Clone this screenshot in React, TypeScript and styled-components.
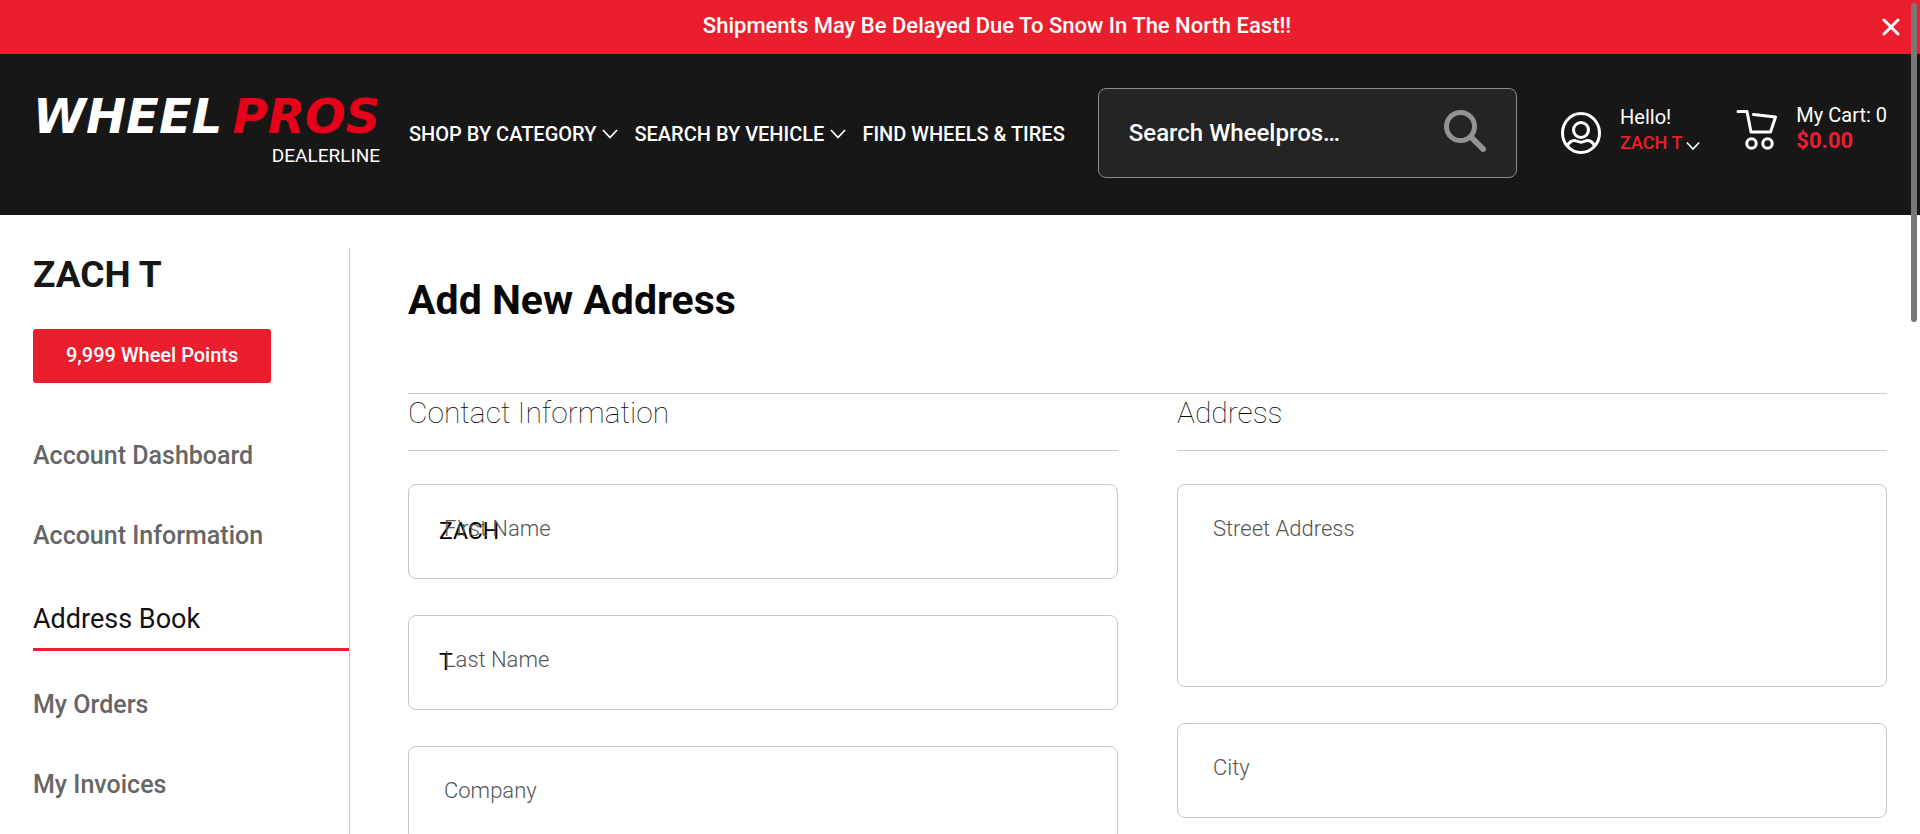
import React from 'react';
import styled, { createGlobalStyle } from 'styled-components';

const red = '#eb1e2e';
const line = '#c8c8c8';

const GlobalStyle = createGlobalStyle`
  *, *::before, *::after { box-sizing: border-box; }
  html, body { height: 100%; margin: 0; overflow: hidden; }
  #root { height: 100%; }
  body { background: #fff; color: #080808; font-family: Roboto, "Liberation Sans", sans-serif; }
  a { color: inherit; text-decoration: none; }
  button { border: 0; padding: 0; background: none; color: inherit; font-family: inherit; cursor: pointer; }
  h1, h2, p, ul, fieldset { margin: 0; padding: 0; border: 0; }
  ul { list-style: none; }
`;

const Page = styled.div`
  position: relative;
  height: 100%;
  overflow: hidden;
`;

const Banner = styled.div`
  display: flex;
  align-items: center;
  height: 54px;
  padding: 0 20px 0 112px;
  background: ${red};
  color: #fff;
`;

const BannerText = styled.p`
  flex: 1;
  padding-bottom: 2px;
  text-align: center;
  font-size: 22px;
  font-weight: 500;
  line-height: 28px;
`;

const CloseButton = styled.button`
  display: flex;
`;

const Header = styled.header`
  display: flex;
  align-items: center;
  height: 161px;
  padding: 0 33px 4px;
  background: #171717;
  color: #fff;
`;

const Logo = styled.a`
  display: flex;
  flex-direction: column;
  width: 347px;
  flex: none;
`;

const LogoName = styled.span`
  display: flex;
  justify-content: space-between;
  font: italic 700 48px/36px "DejaVu Sans", sans-serif;
`;

const LogoAccent = styled.span`
  color: #e60019;
`;

const LogoLine = styled.span`
  margin-top: 10px;
  text-align: right;
  font-size: 19px;
  line-height: 24px;
`;

const Nav = styled.nav`
  display: flex;
  gap: 16px;
  margin-left: 29px;
  padding-top: 2px;
`;

const NavLink = styled.a`
  display: flex;
  align-items: center;
  gap: 6px;
  font-size: 20px;
  font-weight: 500;
  line-height: 28px;
  white-space: nowrap;
`;

const Search = styled.form`
  display: flex;
  flex: 1;
  align-items: center;
  height: 90px;
  margin: 0 43px 0 33px;
  padding: 0 30px;
  border: 1px solid #8a8a8a;
  border-radius: 8px;
  background: #242424;
`;

const SearchInput = styled.input`
  flex: 1;
  min-width: 0;
  border: 0;
  padding: 0;
  outline: 0;
  background: none;
  color: #fff;
  font: 500 24px/32px Roboto, sans-serif;
  &::placeholder { color: #fff; opacity: 1; }
`;

const Account = styled.button`
  display: flex;
  align-items: center;
  gap: 18px;
  text-align: left;
`;

const Cart = styled.a`
  display: flex;
  align-items: center;
  gap: 18px;
  margin-left: 36px;
  padding-bottom: 6px;
`;

const Stack = styled.span<{ $lift: number }>`
  display: flex;
  flex-direction: column;
  padding-bottom: ${p => p.$lift}px;
  font-size: 20px;
  line-height: 26px;
  white-space: nowrap;
`;

const UserName = styled.span`
  display: flex;
  align-items: center;
  gap: 4px;
  color: ${red};
  font-size: 18px;
  font-weight: 500;
  svg { margin-top: 6px; }
`;

const Total = styled.strong`
  color: ${red};
  font-size: 22px;
  font-weight: 700;
`;

const Body = styled.div`
  display: flex;
  align-items: stretch;
  gap: 58px;
  padding: 33px 33px 0;
`;

const Sidebar = styled.aside`
  width: 317px;
  flex: none;
  border-right: 1px solid ${line};
`;

const Customer = styled.h2`
  color: #171717;
  font-size: 37px;
  font-weight: 700;
  line-height: 54px;
`;

const Points = styled.button`
  height: 54px;
  margin: 27px 0 33px;
  padding: 0 33px 2px;
  border-radius: 3px;
  background: ${red};
  color: #fff;
  font-size: 20px;
  font-weight: 500;
`;

const MenuLink = styled.a<{ $active?: boolean }>`
  display: block;
  padding: ${p => (p.$active ? '27px 0 13px' : '24px 0')};
  margin-bottom: ${p => (p.$active ? '14px' : '0')};
  border-bottom: ${p => (p.$active ? `3px solid ${red}` : '0')};
  color: ${p => (p.$active ? '#111' : '#666')};
  font-size: ${p => (p.$active ? '27px' : '25px')};
  font-weight: ${p => (p.$active ? 400 : 500)};
  line-height: 32px;
`;

const Main = styled.main`
  flex: 1;
  min-width: 0;
`;

const Title = styled.h1`
  padding: 28px 0 68px;
  font-size: 41px;
  font-weight: 700;
  line-height: 49px;
`;

const Form = styled.form`
  display: grid;
  grid-template-columns: 1fr 1fr;
  column-gap: 59px;
  border-top: 1px solid ${line};
`;

const Group = styled.fieldset`
  display: flex;
  flex-direction: column;
  gap: 36px;
  min-width: 0;
`;

const GroupTitle = styled.h2`
  height: 57px;
  margin-bottom: -3px;
  border-bottom: 1px solid ${line};
  font-size: 30px;
  font-weight: 100;
  line-height: 38px;
`;

const FieldBox = styled.div`
  position: relative;
  display: flex;
`;

const Label = styled.label`
  position: absolute;
  top: 31px;
  left: 36px;
  color: #555;
  font-size: 22px;
  font-weight: 300;
  line-height: 28px;
  pointer-events: none;
`;

const Input = styled.input`
  width: 100%;
  height: 95px;
  padding: 0 30px;
  border: 1px solid ${line};
  border-radius: 8px;
  background: #fff;
  color: #000;
  font: 400 23px/28px Roboto, sans-serif;
`;

const TextArea = styled.textarea`
  width: 100%;
  height: 203px;
  padding: 32px 30px;
  border: 1px solid ${line};
  border-radius: 8px;
  background: #fff;
  font: 400 23px/28px Roboto, sans-serif;
  resize: none;
`;

const ScrollThumb = styled.div`
  position: absolute;
  top: 3px;
  right: 3px;
  width: 6px;
  height: 319px;
  border-radius: 3px;
  background: #777;
`;

const Chevron = ({ size = 16 }: { size?: number }) => (
  <svg width={size} height="10" viewBox="0 0 16 10" fill="none" stroke="#fff" strokeWidth="1.8">
    <path d="M1 1l7 7.500 7-7.500" />
  </svg>
);

const CloseIcon = () => (
  <svg width="18" height="18" viewBox="0 0 18 18" fill="none" stroke="#fff" strokeWidth="3" strokeLinecap="round">
    <path d="M2 2l14 14M16 2L2 16" />
  </svg>
);

const SearchIcon = () => (
  <svg width="42" height="42" viewBox="0 0 42 42" fill="none" stroke="#929292" strokeLinecap="round">
    <circle cx="16.500" cy="16.500" r="14" strokeWidth="5" />
    <path d="M27 27l12 12" strokeWidth="6" />
  </svg>
);

const UserIcon = () => (
  <svg width="42" height="44" viewBox="0 0 42 44" fill="none" stroke="#fff" strokeWidth="3">
    <ellipse cx="21" cy="22" rx="18.500" ry="19.500" />
    <circle cx="21" cy="19" r="7.500" />
    <path d="M7.500 35c1.500-3.500 4-5.500 7-5.500 2.200 0 3.500 1.700 6.500 1.700s4.300-1.700 6.500-1.700c3 0 5.500 2 7 5.500" />
  </svg>
);

const CartIcon = () => (
  <svg width="42" height="42" viewBox="0 0 42 42" fill="none" stroke="#fff" strokeWidth="3" strokeLinecap="round" strokeLinejoin="round">
    <path d="M2 2.500h9l4 20.500h19.500l5-15L17.500 5.500" />
    <circle cx="15.500" cy="34.500" r="4.700" />
    <circle cx="31.500" cy="34.500" r="4.700" />
  </svg>
);

const menu = ['Account Dashboard', 'Account Information', 'Address Book', 'My Orders', 'My Invoices'];

type FieldProps = { id: string; label: string; value?: string; multiline?: boolean };

const Field = ({ id, label, value, multiline }: FieldProps) => (
  <FieldBox>
    {multiline ? <TextArea id={id} /> : <Input id={id} type="text" defaultValue={value} />}
    <Label htmlFor={id}>{label}</Label>
  </FieldBox>
);

export default function App() {
  return (
    <Page>
      <GlobalStyle />
      <Banner>
        <BannerText>Shipments May Be Delayed Due To Snow In The North East!!</BannerText>
        <CloseButton type="button" aria-label="Close"><CloseIcon /></CloseButton>
      </Banner>
      <Header>
        <Logo href="#">
          <LogoName><span>WHEEL</span><LogoAccent>PROS</LogoAccent></LogoName>
          <LogoLine>DEALERLINE</LogoLine>
        </Logo>
        <Nav>
          <NavLink href="#">SHOP BY CATEGORY <Chevron /></NavLink>
          <NavLink href="#">SEARCH BY VEHICLE <Chevron /></NavLink>
          <NavLink href="#">FIND WHEELS &amp; TIRES</NavLink>
        </Nav>
        <Search>
          <SearchInput type="search" aria-label="Search" placeholder="Search Wheelpros…" />
          <button type="button" aria-label="Submit search"><SearchIcon /></button>
        </Search>
        <Account type="button">
          <UserIcon />
          <Stack $lift={6}>
            <span>Hello!</span>
            <UserName>ZACH T <Chevron size={14} /></UserName>
          </Stack>
        </Account>
        <Cart href="#">
          <CartIcon />
          <Stack $lift={4}>
            <span>My Cart: 0</span>
            <Total>$0.00</Total>
          </Stack>
        </Cart>
      </Header>
      <Body>
        <Sidebar>
          <Customer>ZACH T</Customer>
          <Points type="button">9,999 Wheel Points</Points>
          <ul>
            {menu.map(item => (
              <li key={item}>
                <MenuLink href="#" $active={item === 'Address Book'}>{item}</MenuLink>
              </li>
            ))}
          </ul>
        </Sidebar>
        <Main>
          <Title>Add New Address</Title>
          <Form>
            <Group>
              <GroupTitle>Contact Information</GroupTitle>
              <Field id="first-name" label="First Name" value="ZACH" />
              <Field id="last-name" label="Last Name" value="T" />
              <Field id="company" label="Company" />
            </Group>
            <Group>
              <GroupTitle>Address</GroupTitle>
              <Field id="street" label="Street Address" multiline />
              <Field id="city" label="City" />
            </Group>
          </Form>
        </Main>
      </Body>
      <ScrollThumb />
    </Page>
  );
}
